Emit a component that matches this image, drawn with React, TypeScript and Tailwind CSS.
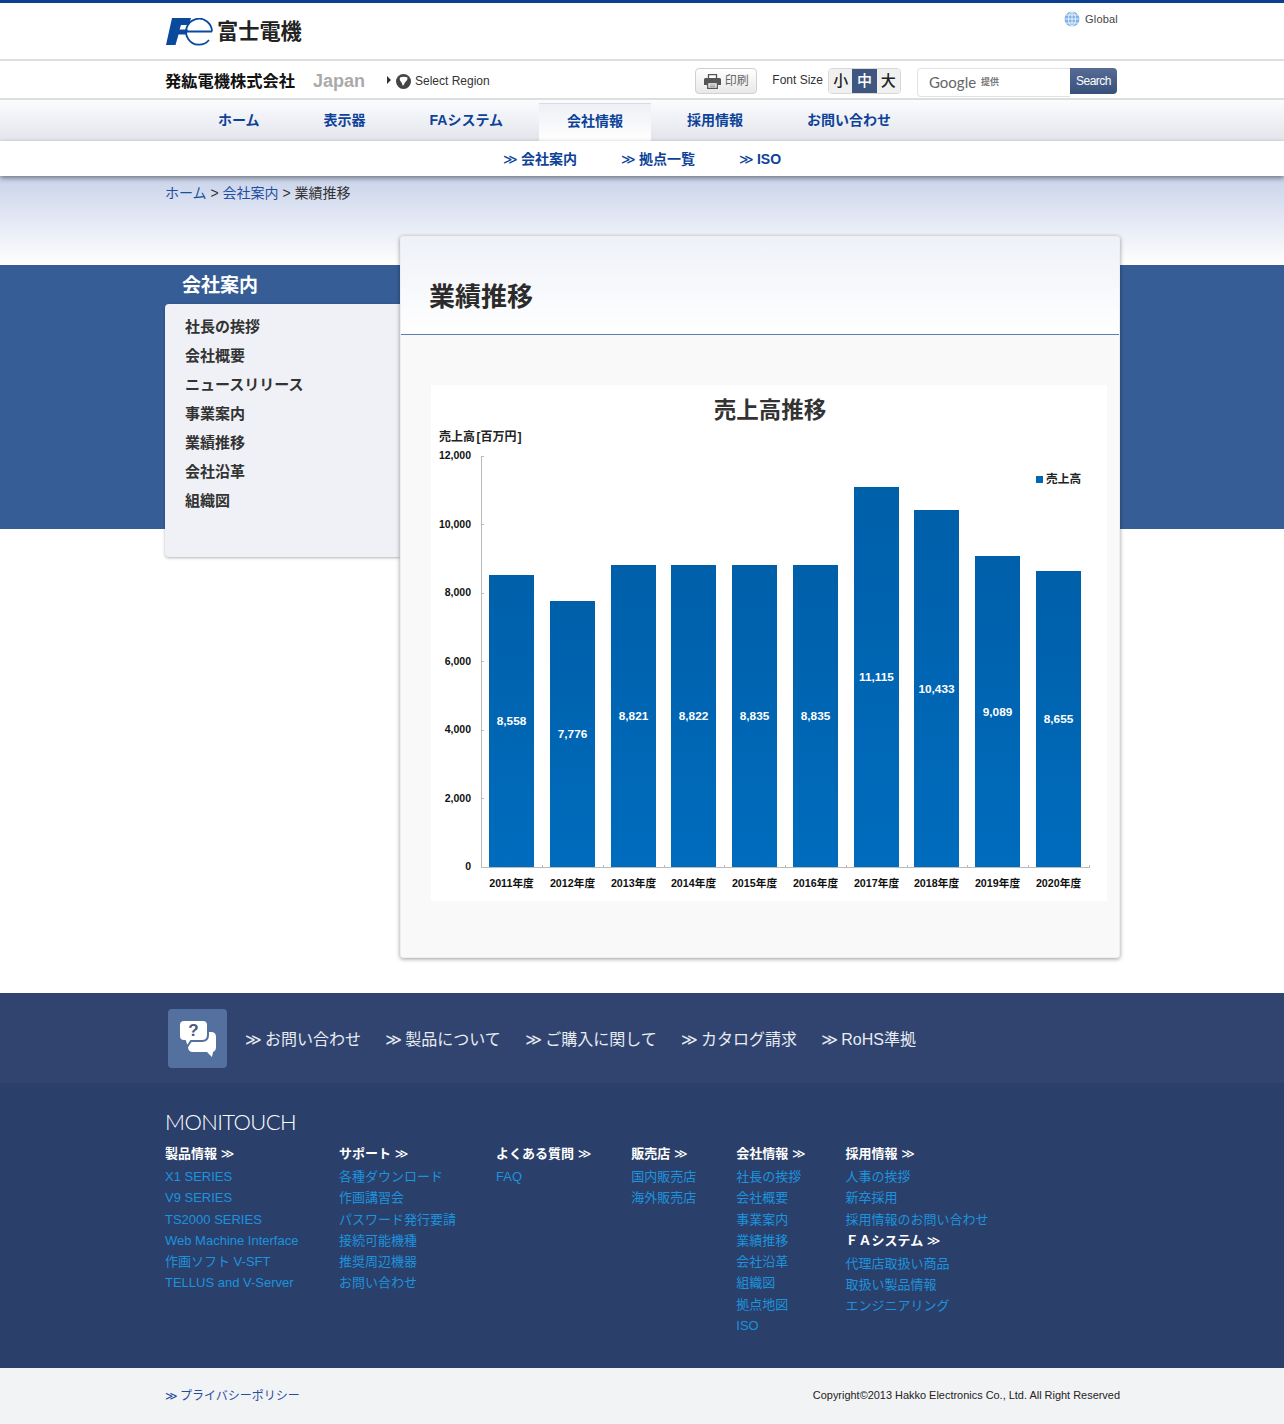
const font = "font-['Liberation_Sans','Noto_Sans_CJK_JP',sans-serif]";

const navItems = ["ホーム", "表示器", "FAシステム", "会社情報", "採用情報", "お問い合わせ"];
const subItems = ["会社案内", "拠点一覧", "ISO"];
const sideItems = ["社長の挨拶", "会社概要", "ニュースリリース", "事業案内", "業績推移", "会社沿革", "組織図"];
const contactItems = ["お問い合わせ", "製品について", "ご購入に関して", "カタログ請求", "RoHS準拠"];

const chartData = [
	{ year: "2011年度", label: "8,558", x: 489, top: 575 },
	{ year: "2012年度", label: "7,776", x: 550, top: 601 },
	{ year: "2013年度", label: "8,821", x: 611, top: 565 },
	{ year: "2014年度", label: "8,822", x: 671, top: 565 },
	{ year: "2015年度", label: "8,835", x: 732, top: 565 },
	{ year: "2016年度", label: "8,835", x: 793, top: 565 },
	{ year: "2017年度", label: "11,115", x: 854, top: 487 },
	{ year: "2018年度", label: "10,433", x: 914, top: 510 },
	{ year: "2019年度", label: "9,089", x: 975, top: 556 },
	{ year: "2020年度", label: "8,655", x: 1036, top: 571 },
];

const yTicks = [
	{ label: "12,000", y: 456, ty: 459 },
	{ label: "10,000", y: 524, ty: 528 },
	{ label: "8,000", y: 593, ty: 596 },
	{ label: "6,000", y: 661, ty: 665 },
	{ label: "4,000", y: 730, ty: 733 },
	{ label: "2,000", y: 798, ty: 802 },
	{ label: "0", y: 867, ty: 870 },
];

const footerCols = [
	{ sections: [{ title: "製品情報", links: ["X1 SERIES", "V9 SERIES", "TS2000 SERIES", "Web Machine Interface", "作画ソフト V-SFT", "TELLUS and V-Server"] }] },
	{ sections: [{ title: "サポート", links: ["各種ダウンロード", "作画講習会", "パスワード発行要請", "接続可能機種", "推奨周辺機器", "お問い合わせ"] }] },
	{ sections: [{ title: "よくある質問", links: ["FAQ"] }] },
	{ sections: [{ title: "販売店", links: ["国内販売店", "海外販売店"] }] },
	{ sections: [{ title: "会社情報", links: ["社長の挨拶", "会社概要", "事業案内", "業績推移", "会社沿革", "組織図", "拠点地図", "ISO"] }] },
	{
		sections: [
			{ title: "採用情報", links: ["人事の挨拶", "新卒採用", "採用情報のお問い合わせ"] },
			{ title: "ＦＡシステム", links: ["代理店取扱い商品", "取扱い製品情報", "エンジニアリング"] },
		],
	},
];

const Chev = ({ className }: { className: string }) => (
	<span className={`inline-block font-['DejaVu_Sans'] font-normal ${className}`}>≫</span>
);

const FeLogo = () => (
	<svg width="47" height="28" viewBox="0 0 47 28">
		<path d="M6 0H25L23 7H15L13.6 11.5H22L20.7 16.5H12.5L9.5 27H0Z" fill="#0a4a9c" />
		<path d="M21 13.5H46M46 13.5A13 13 0 1 0 43 22" fill="none" stroke="#0a4a9c" strokeWidth="1.8" />
	</svg>
);

const GlobeBlue = () => (
	<svg width="16" height="16" viewBox="0 0 16 16">
		<circle cx="8" cy="8" r="7.5" fill="#7fb0e4" />
		<g fill="none" stroke="#fff" strokeWidth="0.8">
			<ellipse cx="8" cy="8" rx="3.5" ry="7.2" />
			<path d="M8 .5V15.5M.8 8H15.2M2 4H14M2 12H14" />
		</g>
	</svg>
);

const GlobeDark = () => (
	<svg width="15" height="15" viewBox="0 0 15 15">
		<circle cx="7.5" cy="7.5" r="7.5" fill="#444" />
		<path d="M4 3.5C6 2.5 9.5 2.6 11.5 3.5 11.8 6 10 7 9 8.5 8.4 9.8 7.8 11 7 12 6 10.5 6 8.5 4.8 7.5 3.8 6.5 3.5 5 4 3.5Z" fill="#fff" />
	</svg>
);

const PrinterIcon = () => (
	<svg width="17" height="15" viewBox="0 0 17 15">
		<path d="M4.5 4V.7H12.5V4" fill="#fff" stroke="#555" strokeWidth="1.3" />
		<path d="M1.5 4H15.5Q17 4 17 5.5V11H14V8.5H3V11H0V5.5Q0 4 1.5 4Z" fill="#555" />
		<path d="M3.7 8.7H13.3V14.3H3.7Z" fill="#fff" stroke="#555" strokeWidth="1.3" />
		<path d="M5.5 11H11.5M5.5 12.8H11.5" stroke="#777" strokeWidth="0.9" />
	</svg>
);

const ChatIcon = () => (
	<svg width="38" height="38" viewBox="0 0 38 38">
		<path d="M15 13H32Q37 13 37 18V28Q37 32 34 33L33 38 28 33H14Q9 33 9 28V18Q9 13 15 13Z" fill="#fff" />
		<path d="M5 1H24Q29 1 29 6V16Q29 22 23 22H12L8 28 6 22H5Q0 22 0 17V6Q0 1 5 1Z" fill="#fff" stroke="#54709f" strokeWidth="2" />
		<text x="14.5" y="17" textAnchor="middle" fontSize="17" fontWeight="700" fill="#4a5a78" fontFamily="Liberation Sans">?</text>
	</svg>
);

const SalesChart = () => (
	<svg width="676" height="516" viewBox="431 385 676 516" className="bg-white block" fontFamily="Liberation Sans, Noto Sans CJK JP, sans-serif">
		<defs>
			<linearGradient id="barFill" x1="0" y1="0" x2="0" y2="1">
				<stop offset="0" stopColor="#005fa9" />
				<stop offset="1" stopColor="#006cbd" />
			</linearGradient>
		</defs>
		<text x="770" y="418" textAnchor="middle" fontSize="22.5" fontWeight="700" fill="#333">売上高推移</text>
		<text x="439" y="441" fontSize="12" fontWeight="700" fill="#222">
			売上高<tspan dx="1.5">[</tspan>百万円<tspan dx="1">]</tspan>
		</text>
		<path d="M481.5 456V867.5H1089" fill="none" stroke="#bbb" />
		{yTicks.map((t) => (
			<g key={t.label}>
				<path d={`M481 ${t.y + 0.5}H484`} stroke="#bbb" />
				<text x="471" y={t.ty} textAnchor="end" fontSize="10.5" fontWeight="700" fill="#111">{t.label}</text>
			</g>
		))}
		{chartData.map((d) => (
			<g key={d.year}>
				<rect x={d.x} y={d.top} width="45" height={867 - d.top} fill="url(#barFill)" />
				<path d={`M${d.x + 53.5} 865V868`} stroke="#bbb" />
				<text x={d.x + 22.5} y={(d.top + 867) / 2 + 4} textAnchor="middle" fontSize="11.8" fontWeight="700" fill="#fff">{d.label}</text>
				<text x={d.x + 22.5} y="887" textAnchor="middle" fontSize="10.7" fontWeight="700" fill="#111">{d.year}</text>
			</g>
		))}
		<rect x="1036" y="476" width="7" height="7" fill="#0067b5" />
		<text x="1046" y="483" fontSize="11.7" fontWeight="700" fill="#222">売上高</text>
	</svg>
);

const App = () => {
	return (
		<div className={`${font} w-full min-h-[1424px] bg-white text-[#333]`}>
			<header className="h-[59px] border-t-[3px] border-[#0a3f8f] bg-white">
				<div className="ml-[165px] w-[955px] flex justify-between">
					<div className="flex items-center gap-1 pt-[15px] pl-px">
						<FeLogo />
						<span className="text-[21.2px] leading-7 font-bold text-[#222]">富士電機</span>
					</div>
					<div className="flex items-center gap-[5px] pt-2 pr-[2px] h-fit">
						<GlobeBlue />
						<span className="text-[11px] tracking-[0.2px] leading-4 text-[#444]">Global</span>
					</div>
				</div>
			</header>

			<div className="h-[41px] border-y-2 border-[#dedede] bg-white">
				<div className="ml-[165px] w-[955px] h-full flex items-center justify-between">
					<div className="flex items-center pt-[3px]">
						<span className="text-[16.25px] font-bold text-[#111] w-[148px]">発紘電機株式会社</span>
						<span className="text-lg font-bold text-[#aaa] w-[74px]">Japan</span>
						<span className="w-0 h-0 border-y-[4px] border-y-transparent border-l-[4px] border-l-[#333] mr-[5px] -mt-[3px]" />
						<GlobeDark />
						<span className="text-xs text-[#333] ml-[4px]">Select Region</span>
					</div>
					<div className="flex items-start pt-[7px] h-full pr-[3px]">
						<div className="w-[62px] h-[26px] border border-[#d0d0d0] rounded-[4px] bg-gradient-to-b from-white to-[#e8e8e8] flex items-center justify-center gap-1 text-xs text-[#666]">
							<PrinterIcon />
							<span>印刷</span>
						</div>
						<span className="text-xs leading-[25px] ml-[15px] mr-[5px] text-[#333]">Font Size</span>
						<div className="w-[73px] h-[26px] border border-[#d8d8d8] rounded-[4px] flex overflow-hidden text-[15px] font-medium">
							<span className="w-6 flex items-center justify-center bg-[#f0f0f0] text-[#222]">小</span>
							<span className="w-[25px] flex items-center justify-center bg-[#3f5681] text-white">中</span>
							<span className="w-6 flex items-center justify-center bg-[#f0f0f0] text-[#222]">大</span>
						</div>
						<div className="ml-4 w-[153px] h-[29px] border border-[#e2e2e2] border-r-0 rounded-l-[4px] bg-white flex items-center pl-[11px] gap-[5px]">
							<span className="font-['Lato'] text-[15px] text-[#666]">Google</span>
							<span className="text-[9px] font-bold text-[#777] pt-px">提供</span>
						</div>
						<div className="w-[47px] h-[26px] rounded-r-[4px] bg-gradient-to-b from-[#566c95] to-[#39507c] text-white text-xs tracking-[-0.5px] flex items-center justify-center">Search</div>
					</div>
				</div>
			</div>

			<nav className="h-[41px] bg-gradient-to-b from-[#fbfcfe] to-[#e3e5ec]">
				<div className="ml-[190px] flex gap-2 h-full items-end">
					{navItems.map((n) => (
						<span
							key={n}
							className={`h-[38px] px-7 text-sm font-bold text-[#0d4299] pt-[7px] leading-5 ${
								n === "会社情報" ? "bg-gradient-to-b from-[#eef0f5] to-white border-t border-[#d8dbe2]" : ""
							}`}
						>
							{n}
						</span>
					))}
				</div>
			</nav>

			<div className="relative z-10 h-[35px] bg-white shadow-[0_2px_5px_rgba(0,0,0,0.45)] flex items-center justify-center gap-11 text-sm font-bold text-[#0d4299]">
				{subItems.map((s) => (
					<span key={s}>
						<Chev className="w-[18px]" />
						{s}
					</span>
				))}
			</div>

			<div className="h-[89px] bg-gradient-to-b from-[#c9d3ea] to-white">
				<div className="ml-[165px] pt-[7px] text-sm leading-5">
					<span className="text-[#1f4ea0]">ホーム</span> &gt; <span className="text-[#1f4ea0]">会社案内</span> &gt; 業績推移
				</div>
			</div>

			<main className="relative h-[728px]">
				<div className="absolute inset-x-0 top-0 h-[264px] bg-[#365d96]" />
				<div className="relative ml-[165px] w-[955px] flex items-start">
					<aside className="w-[235px]">
						<h2 className="h-[39px] pl-[17px] text-[19px] leading-[41px] font-bold text-white">会社案内</h2>
						<ul className="h-[253px] rounded-l-[4px] bg-[#eff1f6] shadow-[0_1px_3px_rgba(0,0,0,0.3)] pl-5 pt-[8px]">
							{sideItems.map((s) => (
								<li key={s} className="h-[29px] text-[15px] leading-[29px] font-bold text-[#333]">{s}</li>
							))}
						</ul>
					</aside>
					<section className="-mt-[29px] w-[720px] h-[722px] rounded-[3px] bg-[#f9f9f9] border border-[#eeeeee] shadow-[0_1px_4px_rgba(0,0,0,0.4)]">
						<div className="h-[98px] border-b border-[#5b7db0] bg-gradient-to-b from-[#eef1f8] to-white pl-[28px] pt-[42px]">
							<h1 className="text-[26px] leading-9 font-bold text-[#2b2b2b]">業績推移</h1>
						</div>
						<div className="pl-[30px] pt-[50px]">
							<SalesChart />
						</div>
					</section>
				</div>
			</main>

			<footer>
				<div className="h-[90px] bg-[#31446f]">
					<div className="ml-[165px] flex items-center h-full">
						<div className="w-[59px] h-[59px] ml-[3px] rounded-[4px] bg-[#54709f] flex items-center justify-center">
							<ChatIcon />
						</div>
						<div className="ml-[18px] pt-[3px] flex gap-[24.3px] text-base text-[#e8ecf4]">
							{contactItems.map((c) => (
								<span key={c}>
									<Chev className="w-5" />
									{c}
								</span>
							))}
						</div>
					</div>
				</div>
				<div className="h-[285px] bg-[#2b3f6b] pl-[165px] pt-[27px]">
					<div className="font-['Lato'] font-light text-[22px] leading-6 text-white tracking-[-0.6px]">MONITOUCH</div>
					<div className="flex gap-10 mt-[8px]">
						{footerCols.map((col, i) => (
							<div key={i} className={i === 0 ? "w-[134px]" : ""}>
								{col.sections.map((sec, j) => (
									<div key={sec.title} className={j > 0 ? "-mt-px" : ""}>
										<div className="text-[13px] font-bold text-white leading-[23px] h-6">
											{sec.title} <Chev className="" />
										</div>
										{sec.links.map((l) => (
											<div key={l} className="text-[13px] leading-[21.3px] text-[#1c93dc] whitespace-nowrap">{l}</div>
										))}
									</div>
								))}
							</div>
						))}
					</div>
				</div>
				<div className="h-14 bg-[#f2f3f5] pl-[165px] w-full flex items-center">
					<div className="w-[955px] flex justify-between items-center">
						<span className="text-xs text-[#1f4ea0]">
							<Chev className="w-[15px]" />
							プライバシーポリシー
						</span>
						<span className="text-[10.95px] -mt-px text-[#222]">Copyright©2013 Hakko Electronics Co., Ltd. All Right Reserved</span>
					</div>
				</div>
			</footer>
		</div>
	);
};

export default App;
